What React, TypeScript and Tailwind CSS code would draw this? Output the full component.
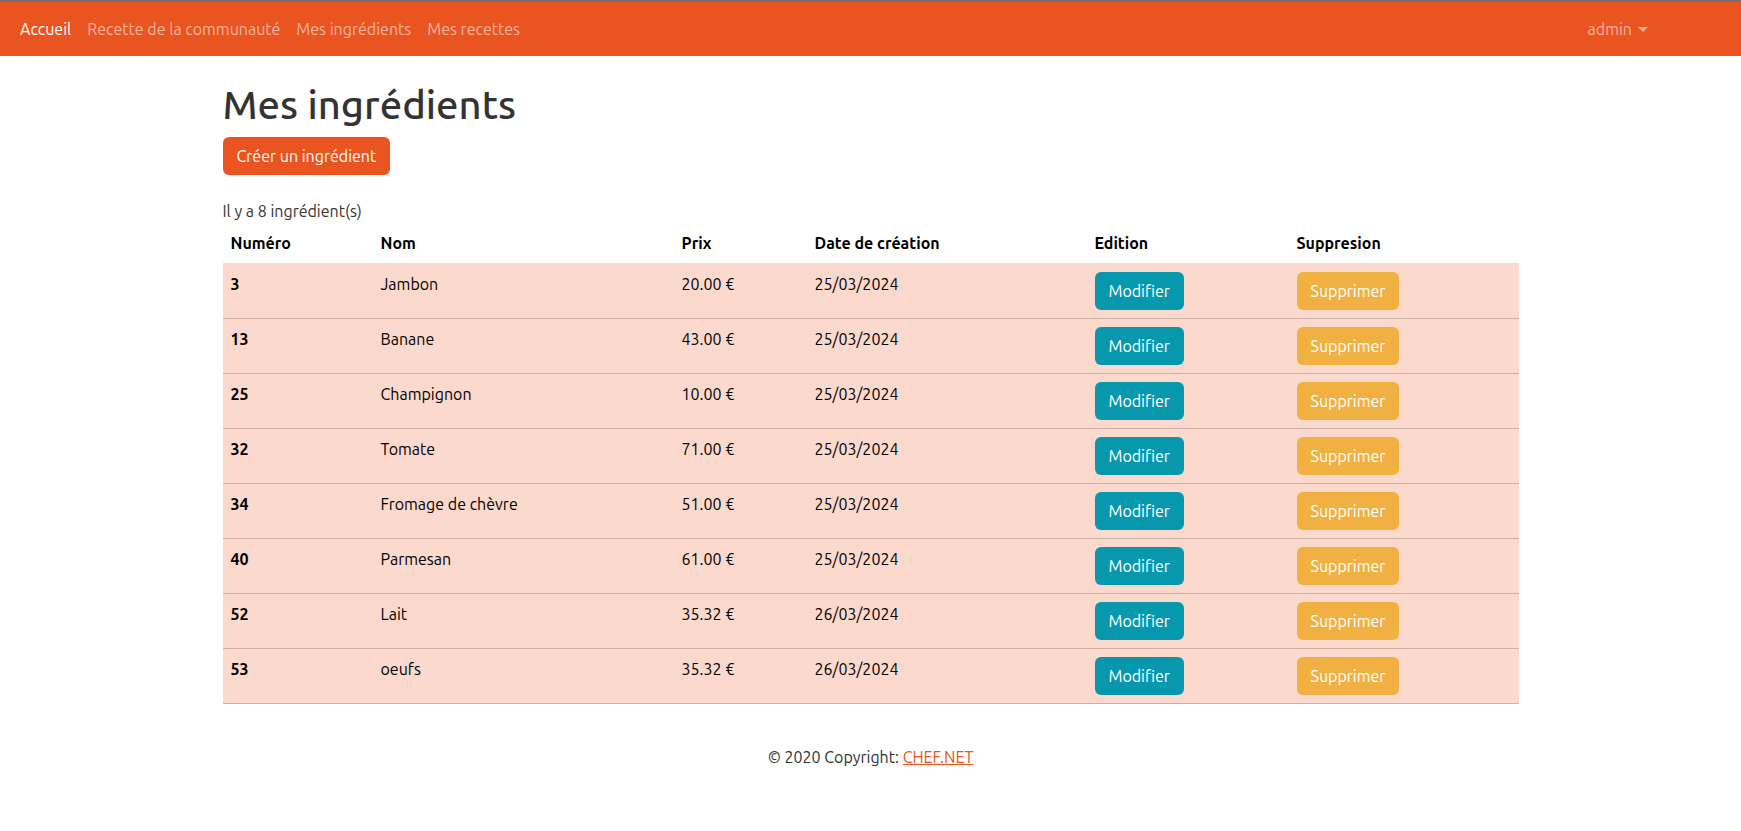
import React from "react";

type Ingredient = {
  id: number;
  nom: string;
  prix: string;
  date: string;
};

const ingredients: Ingredient[] = [
  { id: 3, nom: "Jambon", prix: "20.00 €", date: "25/03/2024" },
  { id: 13, nom: "Banane", prix: "43.00 €", date: "25/03/2024" },
  { id: 25, nom: "Champignon", prix: "10.00 €", date: "25/03/2024" },
  { id: 32, nom: "Tomate", prix: "71.00 €", date: "25/03/2024" },
  { id: 34, nom: "Fromage de chèvre", prix: "51.00 €", date: "25/03/2024" },
  { id: 40, nom: "Parmesan", prix: "61.00 €", date: "25/03/2024" },
  { id: 52, nom: "Lait", prix: "35.32 €", date: "26/03/2024" },
  { id: 53, nom: "oeufs", prix: "35.32 €", date: "26/03/2024" },
];

const Navbar = () => (
  <nav className="h-[56px] bg-[#e95420] border-t-2 border-[#6e6e6e] flex items-center px-3">
    <div className="flex items-center">
      <a className="px-2 text-white">Accueil</a>
      <a className="px-2 text-[#f7b39b]">Recette de la communauté</a>
      <a className="px-2 text-[#f7b39b]">Mes ingrédients</a>
      <a className="px-2 text-[#f7b39b]">Mes recettes</a>
    </div>
    <div className="ml-auto mr-[73px] flex items-center gap-[6px] text-[#f7b39b] px-2">
      admin
      <span className="inline-block w-0 h-0 border-l-[5px] border-r-[5px] border-t-[5px] border-l-transparent border-r-transparent border-t-[#f7b39b] mt-[1px]" />
    </div>
  </nav>
);

export default function App() {
  return (
    <div className="min-h-[831px] bg-white text-[#333] text-base font-['Ubuntu','Lato','Liberation_Sans',sans-serif]">
      <Navbar />

      <main className="w-[1296px] mx-auto pt-[25px]">
        <h1 className="text-[40px] leading-[48px] font-medium text-[#333] mb-2">Mes ingrédients</h1>
        <button className="h-[38px] px-[14px] rounded-md bg-[#e95420] text-white">Créer un ingrédient</button>

        <p className="mt-6 leading-6">Il y a 8 ingrédient(s)</p>

        <table className="w-full table-fixed border-collapse mb-4 text-black">
          <colgroup>
            <col className="w-[150px]" />
            <col className="w-[301px]" />
            <col className="w-[133px]" />
            <col className="w-[280px]" />
            <col className="w-[202px]" />
            <col />
          </colgroup>
          <thead>
            <tr className="border-b border-[#dee2e6] text-left">
              <th className="p-2 font-bold">Numéro</th>
              <th className="p-2 font-bold">Nom</th>
              <th className="p-2 font-bold">Prix</th>
              <th className="p-2 font-bold">Date de création</th>
              <th className="p-2 font-bold">Edition</th>
              <th className="p-2 font-bold">Suppresion</th>
            </tr>
          </thead>
          <tbody className="bg-[#fbd9cd]">
            {ingredients.map((ing) => (
              <tr key={ing.id} className="border-b border-[#c9b1a8] align-top">
                <td className="p-2 font-bold">{ing.id}</td>
                <td className="p-2">{ing.nom}</td>
                <td className="p-2">{ing.prix}</td>
                <td className="p-2">{ing.date}</td>
                <td className="p-2">
                  <button className="h-[38px] px-[14px] rounded-md bg-[#0898ae] text-white">Modifier</button>
                </td>
                <td className="p-2">
                  <button className="h-[38px] px-[14px] rounded-md bg-[#f0b142] text-white">Supprimer</button>
                </td>
              </tr>
            ))}
          </tbody>
        </table>
      </main>

      <footer className="text-center pt-[25px] leading-6 text-[#333]">
        © 2020 Copyright: <a className="text-[#e95420] underline">CHEF.NET</a>
      </footer>
    </div>
  );
}
